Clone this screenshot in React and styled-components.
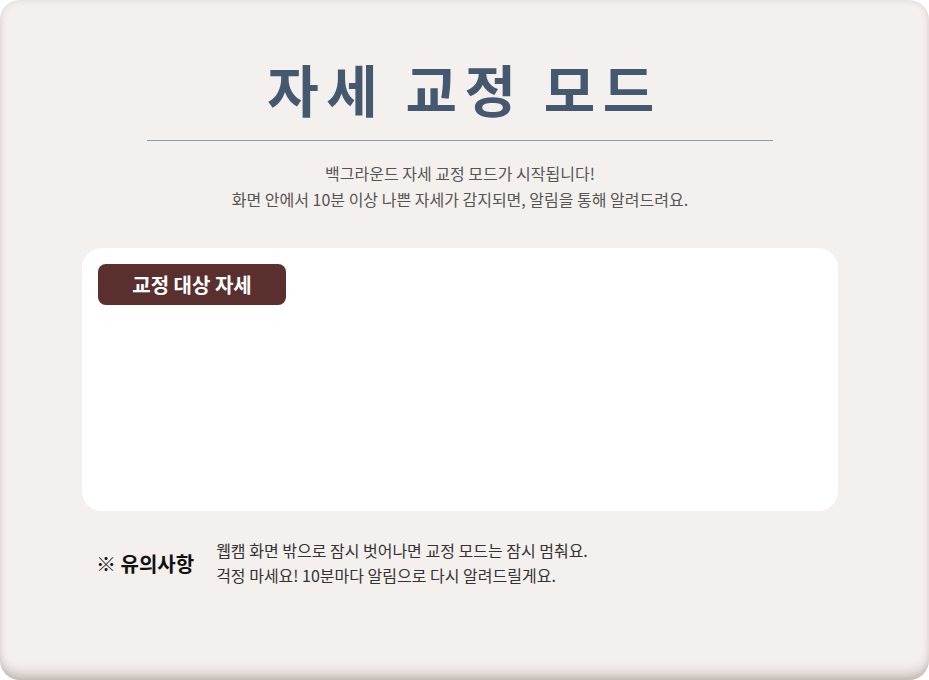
import styled, { createGlobalStyle } from 'styled-components';

const GlobalStyle = createGlobalStyle`
  html, body {
    margin: 0;
    padding: 0;
    background: #ffffff;
  }
  * {
    box-sizing: border-box;
  }
  body {
    font-family: "Noto Sans CJK KR", "Noto Sans", sans-serif;
  }
`;

export default function App() {
  return (
    <>
      <GlobalStyle />
      <Screen>
        {/* 제목 */}
        <Title>자세 교정 모드</Title>
        <Divider />
        <Intro>
          <p>백그라운드 자세 교정 모드가 시작됩니다!</p>
          <p>화면 안에서 10분 이상 나쁜 자세가 감지되면, 알림을 통해 알려드려요.</p>
        </Intro>

        {/* 교정 대상 자세 */}
        <PosePanel>
          <PoseTag>교정 대상 자세</PoseTag>
        </PosePanel>

        {/* 유의사항 */}
        <Notice>
          <NoticeTitle>※ 유의사항</NoticeTitle>
          <NoticeText>
            <p>웹캠 화면 밖으로 잠시 벗어나면 교정 모드는 잠시 멈춰요.</p>
            <p>걱정 마세요! 10분마다 알림으로 다시 알려드릴게요.</p>
          </NoticeText>
        </Notice>
      </Screen>
    </>
  );
}

const Screen = styled.div`
  width: 929px;
  height: 680px;
  padding: 56px 9px 0 0;
  display: flex;
  flex-direction: column;
  align-items: center;
  background: #f4f0ed;
  border-radius: 20px;
  box-shadow: inset 0 -12px 12px -6px rgba(110, 80, 76, 0.32),
    inset 0 0 6px rgba(110, 80, 76, 0.16);
`;

const Title = styled.h1`
  margin: 0 0 0 9px;
  height: 64px;
  font-size: 56px;
  line-height: 64px;
  font-weight: 700;
  letter-spacing: 7.5px;
  color: #44586f;
  text-align: center;
`;

const Divider = styled.hr`
  width: 626px;
  height: 1px;
  margin: 20px 0 0;
  border: 0;
  background: #939ca6;
`;

const Intro = styled.div`
  margin-top: 19px;
  text-align: center;
  font-size: 16px;
  line-height: 26px;
  color: #555555;
  p {
    margin: 0;
  }
`;

const PosePanel = styled.section`
  width: 756px;
  height: 263px;
  margin-top: 36px;
  padding: 16px;
  background: #ffffff;
  border-radius: 20px;
`;

const PoseTag = styled.div`
  width: 188px;
  height: 41px;
  display: flex;
  align-items: center;
  justify-content: center;
  background: #5a302e;
  border-radius: 8px;
  color: #ffffff;
  font-size: 20px;
  font-weight: 700;
`;

const Notice = styled.div`
  width: 756px;
  margin-top: 27px;
  padding-left: 14px;
  display: flex;
  align-items: center;
  gap: 22px;
`;

const NoticeTitle = styled.h2`
  margin: 0;
  font-size: 20px;
  font-weight: 700;
  color: #111111;
`;

const NoticeText = styled.div`
  font-size: 16px;
  line-height: 25px;
  color: #333333;
  p {
    margin: 0;
  }
`;
